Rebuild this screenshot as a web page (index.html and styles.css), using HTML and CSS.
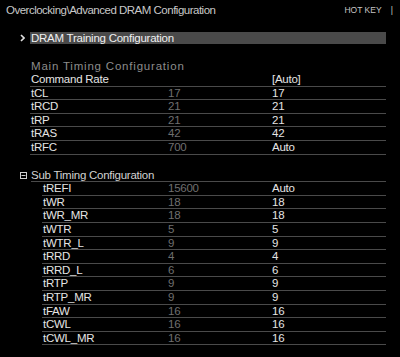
FILE: index.html
```html
<!DOCTYPE html>
<html>
<head>
    <meta charset="utf-8">
    <title>Advanced DRAM Configuration</title>
    <link rel="stylesheet" href="styles.css">
</head>
<body>
    <div class="screen">
        <div class="header">
            <span class="path">Overclocking\Advanced DRAM Configuration</span>
            <span class="hotkey">HOT KEY <span class="sep">|</span></span>
        </div>

        <div class="submenu">
            <span class="chevron">
                <svg width="5" height="8" viewBox="0 0 5 8"><path d="M1 1 L4 4 L1 7" fill="none" stroke="#e0e0e0" stroke-width="1.6"/></svg>
            </span>
            <span class="submenu-label">DRAM Training Configuration</span>
        </div>

        <div class="group main">
            <div class="group-title">Main Timing Configuration</div>
            <div class="row"><span class="name">Command Rate</span><span class="cur"></span><span class="val">[Auto]</span></div>
            <div class="row"><span class="name">tCL</span><span class="cur">17</span><span class="val">17</span></div>
            <div class="row"><span class="name">tRCD</span><span class="cur">21</span><span class="val">21</span></div>
            <div class="row"><span class="name">tRP</span><span class="cur">21</span><span class="val">21</span></div>
            <div class="row"><span class="name">tRAS</span><span class="cur">42</span><span class="val">42</span></div>
            <div class="row"><span class="name">tRFC</span><span class="cur">700</span><span class="val">Auto</span></div>
        </div>

        <div class="group sub">
            <div class="sub-title">
                <svg class="toggle" width="7" height="7" viewBox="0 0 7 7"><rect x="0.5" y="0.5" width="6" height="6" fill="none" stroke="#d0d0d0"/><path d="M1.5 3.5 H5.5" stroke="#d0d0d0"/></svg>
                <span>Sub Timing Configuration</span>
            </div>
            <div class="rows">
                <div class="row"><span class="name">tREFI</span><span class="cur">15600</span><span class="val">Auto</span></div>
                <div class="row"><span class="name">tWR</span><span class="cur">18</span><span class="val">18</span></div>
                <div class="row"><span class="name">tWR_MR</span><span class="cur">18</span><span class="val">18</span></div>
                <div class="row"><span class="name">tWTR</span><span class="cur">5</span><span class="val">5</span></div>
                <div class="row"><span class="name">tWTR_L</span><span class="cur">9</span><span class="val">9</span></div>
                <div class="row"><span class="name">tRRD</span><span class="cur">4</span><span class="val">4</span></div>
                <div class="row"><span class="name">tRRD_L</span><span class="cur">6</span><span class="val">6</span></div>
                <div class="row"><span class="name">tRTP</span><span class="cur">9</span><span class="val">9</span></div>
                <div class="row"><span class="name">tRTP_MR</span><span class="cur">9</span><span class="val">9</span></div>
                <div class="row"><span class="name">tFAW</span><span class="cur">16</span><span class="val">16</span></div>
                <div class="row"><span class="name">tCWL</span><span class="cur">16</span><span class="val">16</span></div>
                <div class="row"><span class="name">tCWL_MR</span><span class="cur">16</span><span class="val">16</span></div>
            </div>
        </div>
    </div>
</body>
</html>
```

FILE: styles.css
```css
body {
    margin: 0;
    background-color: #000;
    color: #e4e4e4;
    font-family: "Liberation Sans", Arial, sans-serif;
    font-size: 11.5px;
    letter-spacing: -0.25px;
}

.screen {
    width: 400px;
    height: 357px;
    overflow: hidden;
}

.header {
    display: flex;
    justify-content: space-between;
    align-items: center;
    height: 20px;
    padding: 0 7px 0 6px;
    color: #c8c8c8;
}

.path {
    letter-spacing: -0.5px;
}

.hotkey {
    font-size: 8.5px;
    letter-spacing: 0;
    color: #c4c4c4;
}

.hotkey .sep {
    margin-left: 7px;
}

.submenu {
    display: flex;
    align-items: center;
    height: 12px;
    margin-top: 12px;
}

.chevron {
    display: flex;
    width: 30px;
    justify-content: flex-end;
    padding-right: 5px;
    box-sizing: border-box;
}

.submenu-label {
    flex: 0 0 356px;
    height: 12px;
    line-height: 12px;
    padding-left: 1px;
    box-sizing: border-box;
    background-color: #4a4a4a;
    color: #f0f0f0;
}

.group.main {
    margin: 16px 0 0 30px;
    width: 356px;
}

.group-title {
    height: 12px;
    line-height: 12px;
    padding-left: 1px;
    color: #8c8c8c;
    letter-spacing: 0.8px;
    margin-bottom: 1px;
}

.row {
    display: grid;
    grid-template-columns: 138px 104px 1fr;
    height: 13.6px;
    line-height: 13px;
    box-sizing: border-box;
    border-bottom: 1px solid #4a4a4a;
}

.name {
    padding-left: 1px;
}

.cur {
    color: #6f6f6f;
}

.group.sub {
    margin: 14px 0 0 20px;
    width: 366px;
}

.sub-title {
    display: flex;
    align-items: center;
    gap: 4px;
    height: 13.6px;
    color: #d2d2d2;
}

.sub-title span {
    flex: 1;
    height: 13.6px;
    line-height: 13px;
    box-sizing: border-box;
    border-bottom: 1px solid #4a4a4a;
}

.rows {
    margin-left: 22px;
}

.sub .row {
    grid-template-columns: 126px 104px 1fr;
}
```
